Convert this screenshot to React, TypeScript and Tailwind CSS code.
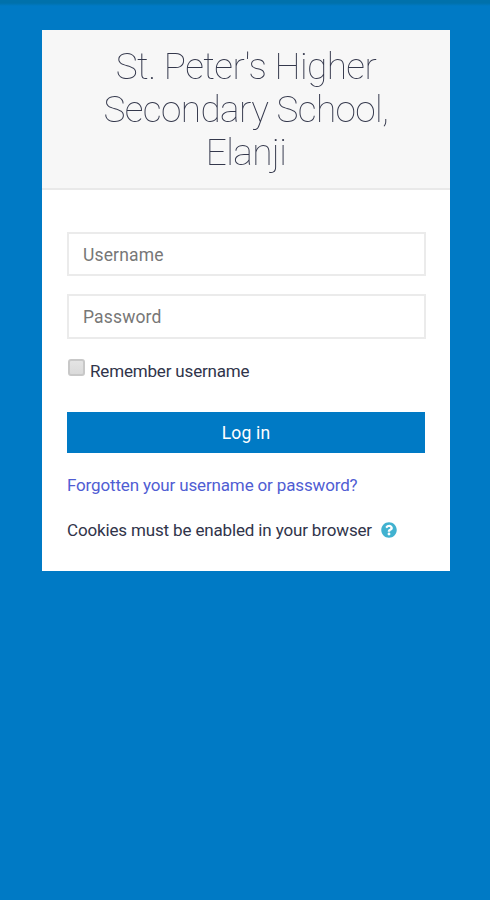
import { FaQuestionCircle } from "react-icons/fa";

function App() {
  return (
    <div className="min-h-screen bg-linear-to-b from-[#0071ab] from-[3px] to-[#007ac5] to-[6px] px-[42px] pt-[30px] font-['Roboto',sans-serif] text-[17px] text-[#30344a]">
      <main className="w-[408px] h-[541px] bg-white">
        {/* School name */}
        <header className="h-[160px] bg-[#f7f7f7] border-b-2 border-[#e9e9e9] pt-[15px] text-center">
          <h1 className="text-[37px] leading-[43px] font-thin tracking-[-0.6px] text-[#34384c] will-change-transform">
            St. Peter's Higher
            <br />
            Secondary School,
            <br />
            Elanji
          </h1>
        </header>

        <form className="px-[25px] pt-[42px]">
          <input
            type="text"
            placeholder="Username"
            className="block w-[359px] h-[44px] border-2 border-[#ebebeb] px-[14px] pt-px text-[17.5px] tracking-[0.15px] placeholder:text-[#777777]"
          />
          <input
            type="password"
            placeholder="Password"
            className="block w-[359px] h-[45px] mt-[18px] border-2 border-[#ebebeb] px-[14px] text-[17.5px] tracking-[0.15px] placeholder:text-[#777777]"
          />

          <label className="flex mt-[19px] h-[28px] items-center gap-[5px] tracking-[-0.17px]">
            <span className="ml-px size-[17px] -mt-[9px] rounded-[3px] border-2 border-[#c8c8c8] bg-linear-to-b from-[#e4e4e4] to-[#dadada]" />
            Remember username
          </label>

          <button
            type="button"
            className="block w-full h-[41px] mt-[26px] pt-[2px] bg-[#007ac5] text-[17.5px] tracking-[0.2px] text-white"
          >
            Log in
          </button>

          <a
            href="#"
            className="block mt-[19px] leading-[26px] tracking-[-0.15px] text-[#505dd3]"
          >
            Forgotten your username or password?
          </a>
          <p className="flex items-center mt-[19px] leading-[26px] tracking-[-0.15px]">
            Cookies must be enabled in your browser
            <FaQuestionCircle className="ml-[9px] size-[16px] text-[#41b2d0]" />
          </p>
        </form>
      </main>
    </div>
  );
}

export default App;
